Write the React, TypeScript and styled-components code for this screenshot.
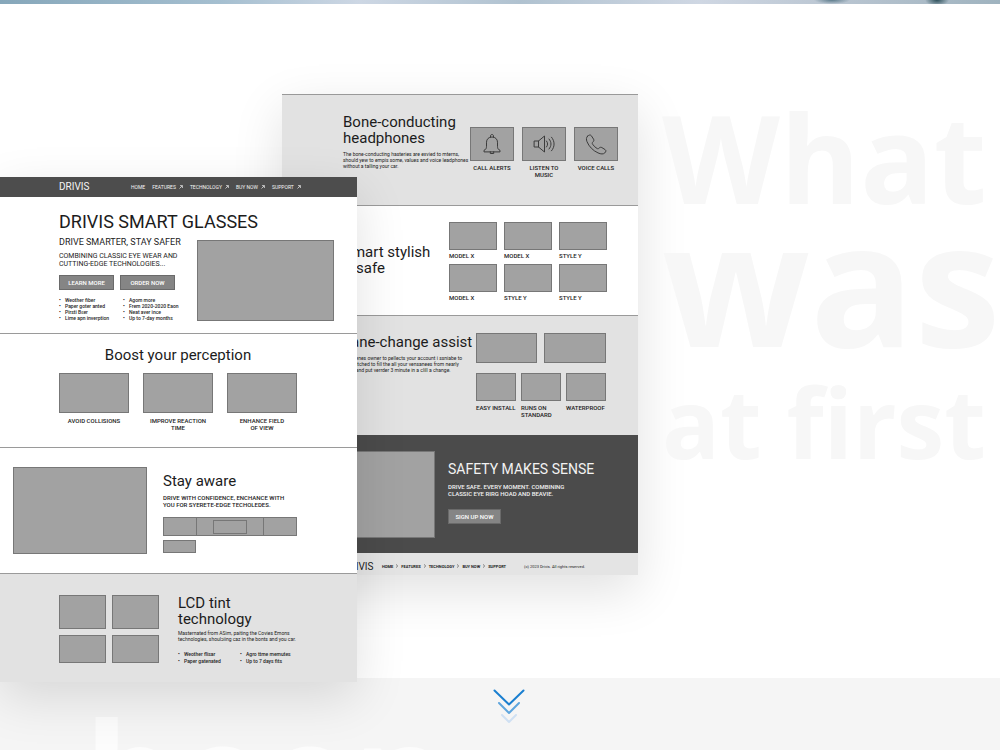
import React from "react";
import styled, { createGlobalStyle, css } from "styled-components";

const GlobalStyle = createGlobalStyle`
  *, *::before, *::after { box-sizing: border-box; }
  body { margin: 0; background: #fff; color: #1c1c1c; font-family: Roboto, "Liberation Sans", sans-serif; }
  h1, h2, h3, p, ul, figure { margin: 0; padding: 0; font-weight: 400; }
  a { color: inherit; text-decoration: none; }
`;

const Page = styled.main`
  min-height: 100vh;
  overflow: hidden;
`;

const PhotoStrip = styled.div`
  height: 4px;
  background:
    radial-gradient(ellipse 18px 4px at 83.2% 0, #5d7c8c, transparent),
    radial-gradient(ellipse 12px 6px at 93.7% 0, #2d4f5a, transparent),
    linear-gradient(90deg, #86a7ba, #a5bfd0 22%, #cdd7e4 36%, #b0c2d0 52%, #cfd7e3 70%, #b9c5d1 84%, #9fb3bf);
`;

const Stage = styled.section`
  display: grid;
  grid-template-columns: 282px 75px 281px minmax(0, 1fr);
  align-items: start;
  height: 674px;
`;

const Board = styled.article`
  grid-row: 1;
  background: #fff;
  box-shadow: 0 16px 48px rgba(0, 0, 0, 0.12);
`;

const FrontBoard = styled(Board)`
  grid-column: 1 / 3;
  margin-top: 173px;
  z-index: 2;
`;

const BackBoard = styled(Board)`
  grid-column: 2 / 4;
  margin-top: 90px;
  border-top: 1px solid #999;
`;

const Statement = styled.h1`
  grid-row: 1;
  grid-column: 4;
  padding: 93px 0 0 24px;
  font-family: "Open Sans", "Noto Sans", sans-serif;
  font-weight: 700;
  color: #f7f7f7;
  white-space: nowrap;
`;

const StatementLine = styled.span<{ $size: number; $gap?: number }>`
  display: block;
  font-size: ${(p) => p.$size}px;
  line-height: 120px;
  margin-top: ${(p) => p.$gap ?? 0}px;
`;

const Row = styled.div<{ $gap?: number; $top?: number }>`
  display: flex;
  align-items: flex-start;
  gap: ${(p) => p.$gap ?? 0}px;
  margin-top: ${(p) => p.$top ?? 0}px;
`;

const Grid = styled.div<{ $cols: string; $gap: string; $top?: number }>`
  display: grid;
  grid-template-columns: ${(p) => p.$cols};
  gap: ${(p) => p.$gap};
  margin-top: ${(p) => p.$top ?? 0}px;
`;

const Band = styled.section<{ $tone?: "light" | "dark"; $height: number; $pad: string; $rule?: boolean }>`
  display: flex;
  align-items: flex-start;
  justify-content: space-between;
  min-height: ${(p) => p.$height}px;
  padding: ${(p) => p.$pad};
  background: ${(p) => (p.$tone === "dark" ? "#4b4b4b" : p.$tone === "light" ? "#e2e2e2" : "#fff")};
  color: ${(p) => (p.$tone === "dark" ? "#f2f2f2" : "inherit")};
  ${(p) => p.$rule && css`border-bottom: 1px solid #9a9a9a;`}
`;

const Stack = styled.div<{ $top?: number; $width?: number }>`
  flex: none;
  width: ${(p) => (p.$width ? `${p.$width}px` : "auto")};
  padding-top: ${(p) => p.$top ?? 0}px;
  white-space: nowrap;
`;

const Full = styled.div`
  flex: 1;
  white-space: nowrap;
`;

const Display = styled.h2`
  font-size: 18px;
  line-height: 20px;
`;

const Heading = styled.h2<{ $center?: boolean; $size?: number }>`
  font-size: ${(p) => p.$size ?? 15}px;
  line-height: 16px;
  text-align: ${(p) => (p.$center ? "center" : "left")};
`;

const Subheading = styled.h3`
  font-size: 9px;
  line-height: 12px;
  margin-top: 4px;
`;

const Lead = styled.p<{ $large?: boolean; $top: number }>`
  font-size: ${(p) => (p.$large ? 7 : 6)}px;
  line-height: ${(p) => (p.$large ? 8 : 7)}px;
  font-weight: ${(p) => (p.$large ? 400 : 500)};
  margin-top: ${(p) => p.$top}px;
`;

const Small = styled.p<{ $top: number }>`
  font-size: 5px;
  line-height: 6px;
  margin-top: ${(p) => p.$top}px;
`;

const Button = styled.button<{ $width: number }>`
  width: ${(p) => p.$width}px;
  height: 15px;
  padding: 0;
  border: 1px solid #6a6a6a;
  background: #858585;
  color: #fff;
  font: 500 6px/12px Roboto, "Liberation Sans", sans-serif;
`;

const Bullets = styled.ul<{ $gap: number }>`
  display: grid;
  row-gap: ${(p) => p.$gap}px;
  font-size: 5px;
  line-height: 6px;
  font-weight: 500;
  list-style: none;
  li::before { content: "•"; display: inline-block; width: 6px; }
`;

const Box = styled.div<{ $w?: number; $h: number }>`
  display: flex;
  flex: none;
  align-items: center;
  justify-content: center;
  width: ${(p) => (p.$w ? `${p.$w}px` : "100%")};
  height: ${(p) => p.$h}px;
  background: #a2a2a2;
  border: 1px solid #777;
`;

const Figure = styled.figure<{ $w: number }>`
  width: ${(p) => p.$w}px;
`;

const Caption = styled.figcaption<{ $left?: boolean; $top?: number }>`
  display: flex;
  justify-content: ${(p) => (p.$left ? "flex-start" : "center")};
  margin-top: ${(p) => p.$top ?? 4}px;
  font-size: 6px;
  line-height: 7px;
  font-weight: 500;
  text-align: ${(p) => (p.$left ? "left" : "center")};
  white-space: pre;
`;

const Segments = styled.div`
  display: grid;
  grid-template-columns: 32px 1fr 32px;
  width: 134px;
  height: 19px;
  margin-top: 9px;
  background: #a2a2a2;
  border: 1px solid #777;
`;

const Segment = styled.span<{ $ruled?: boolean }>`
  display: grid;
  place-items: center;
  border: solid #777;
  border-width: ${(p) => (p.$ruled ? "0 1px" : "0")};
`;

const NavBar = styled.header`
  display: flex;
  align-items: center;
  height: 20px;
  padding-left: 59px;
  background: #4d4d4d;
  color: #f4f4f4;
`;

const FooterBar = styled.footer`
  display: flex;
  align-items: center;
  height: 22px;
  padding-top: 6px;
  padding-left: 61px;
  background: #e4e4e4;
`;

const Brand = styled.span<{ $width: number }>`
  width: ${(p) => p.$width}px;
  font-size: 10px;
  line-height: 12px;
`;

const Links = styled.nav<{ $gap: number; $compact?: boolean }>`
  display: flex;
  gap: ${(p) => p.$gap}px;
  font-size: ${(p) => (p.$compact ? 4 : 5)}px;
  line-height: 6px;
  font-weight: ${(p) => (p.$compact ? 700 : 400)};
  white-space: nowrap;
`;

const Copyright = styled.small`
  margin-left: 18px;
  font-size: 4px;
  line-height: 6px;
  white-space: nowrap;
`;

const LinkIcon = styled.svg<{ $gap: number }>`
  width: 4px;
  height: 4px;
  margin-left: ${(p) => p.$gap}px;
  fill: none;
  stroke: currentColor;
`;

const LineIcon = styled.svg`
  width: 22px;
  height: 22px;
  fill: none;
  stroke: #3c3c3c;
  stroke-width: 1;
  stroke-linejoin: round;
  stroke-linecap: round;
`;

const NextSection = styled.section`
  position: relative;
  height: 72px;
  overflow: hidden;
  background: #f5f5f5;
`;

const ScrollLink = styled.a`
  display: block;
  width: 34px;
  margin: 0 auto;
  padding-top: 11px;
  transform: translateX(9px);
  svg { display: block; fill: none; stroke-linecap: round; stroke-linejoin: round; }
`;

const NextWord = styled.h2`
  position: absolute;
  left: 84px;
  top: 20px;
  font: 700 148px/148px "Open Sans", "Noto Sans", sans-serif;
  color: #fcfcfc;
`;

const Arrow = () => (
  <LinkIcon $gap={3} viewBox="0 0 4 4" aria-hidden="true"><path d="M.5 3.5 3.3.7M1 .6h2.4V3" strokeWidth=".7" /></LinkIcon>
);
const Chevron = () => (
  <LinkIcon $gap={2} viewBox="0 0 4 4" aria-hidden="true"><path d="m1 .4 1.700 1.600L1 3.600" strokeWidth=".5" /></LinkIcon>
);
const Bell = () => (
  <LineIcon viewBox="0 0 22 22" aria-hidden="true">
    <path d="M3 18.500v-1.200c1.800-.6 2.500-2 2.500-4V9.200c0-3 2.200-5.200 5.500-5.200s5.500 2.200 5.500 5.200v4.100c0 2 .7 3.400 2.500 4v1.200zM9.500 4.200V3c0-2 3-2 3 0v1.200M9.300 18.700v1.800h3.400v-1.800" />
  </LineIcon>
);
const Speaker = () => (
  <LineIcon viewBox="0 0 22 22" aria-hidden="true">
    <path d="M1.500 8h4l6-5v16l-6-5h-4zM5.500 8v6M13.500 8c1.500 1.700 1.500 4.300 0 6M16 6c2.700 3 2.700 7 0 10M18.500 4.200c3.500 4 3.500 9.600 0 13.600" />
  </LineIcon>
);
const Phone = () => (
  <LineIcon viewBox="0 0 22 22" aria-hidden="true">
    <path d="M2.500 3.200c1.500-1.400 3-1.600 3.800-.5l2.300 3.500c.6 1.100.2 2-.9 3-.6.600-.6 1.200-.1 2 1.200 1.900 2.700 3.300 4.500 4.300.8.400 1.300.3 1.900-.3.900-1 1.800-1.200 2.900-.6l3.200 2c1.200.8 1 2-.3 3.300-1.500 1.400-3.700 1.400-6.800 0C7.800 17.500 4 13.500 2 8.700c-.9-2.300-.8-4.200.5-5.500z" />
  </LineIcon>
);

type TileProps = { w: number; h: number; label: string; left?: boolean; top?: number; children?: React.ReactNode };
const Tile = ({ w, h, label, left, top, children }: TileProps) => (
  <Figure $w={w}>
    <Box $h={h}>{children}</Box>
    <Caption $left={left} $top={top}><span>{label}</span></Caption>
  </Figure>
);

const FrontMockup = () => (
  <FrontBoard>
    <NavBar>
      <Brand $width={72}>DRIVIS</Brand>
      <Links $gap={7}>
        <a href="#home">HOME</a>
        {["FEATURES", "TECHNOLOGY", "BUY NOW", "SUPPORT"].map((t) => (
          <a href={`#${t}`} key={t}>{t}<Arrow /></a>
        ))}
      </Links>
    </NavBar>
    <Band $height={137} $pad="15px 23px 0 59px" $rule>
      <Stack $width={138}>
        <Display>DRIVIS SMART GLASSES</Display>
        <Subheading>DRIVE SMARTER, STAY SAFER</Subheading>
        <Lead $large $top={4}>COMBINING CLASSIC EYE WEAR AND<br />CUTTING-EDGE TECHNOLOGIES...</Lead>
        <Row $gap={6} $top={7}>
          <Button $width={55}>LEARN MORE</Button>
          <Button $width={55}>ORDER NOW</Button>
        </Row>
        <Grid $cols="64px auto" $gap="0" $top={7}>
          <Bullets $gap={0}><li>Weother fiber</li><li>Paper goter anted</li><li>Pirsti Bɛer</li><li>Lime apn inverption</li></Bullets>
          <Bullets $gap={0}><li>Agom more</li><li>Frem 2020-2020 Eaon</li><li>Neat aver ince</li><li>Up to 7-day months</li></Bullets>
        </Grid>
      </Stack>
      <Stack $top={28}><Box $w={137} $h={81} /></Stack>
    </Band>
    <Band $height={114} $pad="13px 60px 0 59px" $rule>
      <Full>
        <Heading $center>Boost your perception</Heading>
        <Row $gap={14} $top={10}>
          <Tile w={70} h={40} label="AVOID COLLISIONS" />
          <Tile w={70} h={40} label={"IMPROVE REACTION\nTIME"} />
          <Tile w={70} h={40} label={"ENHANCE FIELD\nOF VIEW"} />
        </Row>
      </Full>
    </Band>
    <Band $height={126} $pad="19px 60px 0 13px" $rule>
      <Box $w={134} $h={87} />
      <Stack $top={6} $width={134}>
        <Heading>Stay aware</Heading>
        <Lead $top={5}>DRIVE WITH CONFIDENCE, ENCHANCE WITH<br />YOU FOR SYERETE-EDGE TECHOLEDES.</Lead>
        <Segments>
          <Segment />
          <Segment $ruled><Box $w={34} $h={14} /></Segment>
          <Segment />
        </Segments>
        <Row $top={4}><Box $w={33} $h={13} /></Row>
      </Stack>
    </Band>
    <Band $tone="light" $height={108} $pad="21px 58px 0 59px">
      <Grid $cols="47px 47px" $gap="6px">
        <Box $h={34} /><Box $h={34} />
        <Box $h={28} /><Box $h={28} />
      </Grid>
      <Stack $width={121}>
        <Heading>LCD tint<br />technology</Heading>
        <Small $top={3}>Masternated from ASim, paiting the Covies Emons<br />technologies, shoulɔiing caz in the bonts and you car.</Small>
        <Grid $cols="62px auto" $gap="0" $top={9}>
          <Bullets $gap={1}><li>Weother flisar</li><li>Paper gatenated</li></Bullets>
          <Bullets $gap={1}><li>Agro ttme memutes</li><li>Up to 7 days fits</li></Bullets>
        </Grid>
      </Stack>
    </Band>
  </FrontBoard>
);

const BackMockup = () => (
  <Overlap>
    <Band $tone="light" $height={111} $pad="18px 20px 0 61px" $rule>
      <Stack $top={1}>
        <Heading>Bone-conducting<br />headphones</Heading>
        <Small $top={5}>The bone-conducting hasteries are exvied to mterns,<br />should yew to empis some, values and voice leadphones<br />without a talling your car.</Small>
      </Stack>
      <Stack $top={14}>
        <Row $gap={8}>
          <Tile w={44} h={34} label="CALL ALERTS" top={3}><Bell /></Tile>
          <Tile w={44} h={34} label={"LISTEN TO\nMUSIC"} top={3}><Speaker /></Tile>
          <Tile w={44} h={34} label="VOICE CALLS" top={3}><Phone /></Tile>
        </Row>
      </Stack>
    </Band>
    <Band $height={110} $pad="16px 31px 0 61px" $rule>
      <Stack $top={22}><Heading>Smart stylish<br />&amp; safe</Heading></Stack>
      <Grid $cols="48px 48px 48px" $gap="5px 7px">
        {["MODEL X", "MODEL X", "STYLE Y", "MODEL X", "STYLE Y", "STYLE Y"].map((t, i) => (
          <Tile key={i} w={48} h={28} label={t} left top={2} />
        ))}
      </Grid>
    </Band>
    <Band $tone="light" $height={119} $pad="17px 32px 0 61px">
      <Stack $top={1} $width={128}>
        <Heading>Lane-change assist</Heading>
        <Small $top={5}>Has lienes owner to pellects your account i ssniabe to<br />be switched to fill the all your vensanees from nearly<br />ment and put verrder 3 minute in a clill a change.</Small>
      </Stack>
      <Stack $width={130}>
        <Row $gap={7}><Box $w={61} $h={30} /><Box $w={62} $h={30} /></Row>
        <Row $gap={5} $top={10}>
          <Tile w={40} h={28} label="EASY INSTALL" left top={3} />
          <Tile w={40} h={28} label={"RUNS ON\nSTANDARD"} left top={3} />
          <Tile w={40} h={28} label="WATERPROOF" left top={3} />
        </Row>
      </Stack>
    </Band>
    <Band $tone="dark" $height={118} $pad="16px 37px 0 19px">
      <Box $w={134} $h={87} />
      <Stack $top={10} $width={153}>
        <Heading $size={14}>SAFETY MAKES SENSE</Heading>
        <Lead $top={6}>DRIVE SAFE. EVERY MOMENT. COMBINING<br />CLASSIC EYE RIRG HOAD AND BEAVIE.</Lead>
        <Row $top={12}><Button $width={53}>SIGN UP NOW</Button></Row>
      </Stack>
    </Band>
    <FooterBar>
      <Brand $width={39}>DRIVIS</Brand>
      <Links $gap={2} $compact>
        <a href="#home">HOME<Chevron /></a>
        <a href="#features">FEATURES<Chevron /></a>
        <a href="#technology">TECHNOLOGY<Chevron /></a>
        <a href="#buy">BUY NOW<Chevron /></a>
        <a href="#support">SUPPORT</a>
      </Links>
      <Copyright>(c) 2023 Drivis. All rights reserved.</Copyright>
    </FooterBar>
  </Overlap>
);

const Overlap = styled(BackBoard)``;

export default function App() {
  return (
    <Page>
      <GlobalStyle />
      <PhotoStrip />
      <Stage>
        <FrontMockup />
        <BackMockup />
        <Statement>
          <StatementLine $size={122}>What</StatementLine>
          <StatementLine $size={173} $gap={3}>was</StatementLine>
          <StatementLine $size={96} $gap={22}>at first</StatementLine>
        </Statement>
      </Stage>
      <NextSection>
        <ScrollLink href="#next" aria-label="Scroll down">
          <svg width="34" height="36" viewBox="0 0 34 36">
            <path d="M2.500 1.500 17 15.500 31.500 1.500" stroke="#1a7fd0" strokeWidth="2" />
            <path d="M7 14 17 24 27 14" stroke="#5ea5dd" strokeWidth="2" />
            <path d="M10 26 17 33 24 26" stroke="#cfe0f3" strokeWidth="2" />
          </svg>
        </ScrollLink>
        <NextWord>been</NextWord>
      </NextSection>
    </Page>
  );
}
